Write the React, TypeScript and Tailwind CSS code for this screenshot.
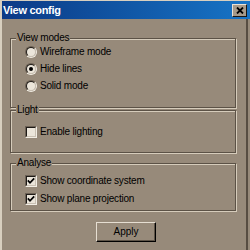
import type { ReactNode } from 'react';

const FONT = { fontFamily: '"Liberation Sans", Arial, sans-serif' };

function Radio({ checked }: { checked?: boolean }) {
  return (
    <span className="flex h-[12px] w-[12px] shrink-0 rounded-full border border-t-[#6c6155] border-l-[#6c6155] border-b-[#f2ede4] border-r-[#f2ede4]">
      <span className="flex flex-1 items-center justify-center rounded-full border border-t-[#1e1a16] border-l-[#1e1a16] border-b-[#c9c0b3] border-r-[#c9c0b3] bg-[#ebe5da]">
        {checked && <span className="h-[4px] w-[4px] rounded-full bg-black" />}
      </span>
    </span>
  );
}

function Checkbox({ checked }: { checked?: boolean }) {
  return (
    <span className="flex h-[12px] w-[12px] shrink-0 border border-t-[#6c6155] border-l-[#6c6155] border-b-[#f2ede4] border-r-[#f2ede4]">
      <span className="flex flex-1 items-center justify-center border border-t-[#1e1a16] border-l-[#1e1a16] border-b-[#c9c0b3] border-r-[#c9c0b3] bg-[#ebe5da]">
        {checked && (
          <svg width="8" height="8" viewBox="0 0 8 8">
            <polyline points="0.8,3.4 3,5.8 7.2,1.4" fill="none" stroke="#000" strokeWidth="1.7" />
          </svg>
        )}
      </span>
    </span>
  );
}

function Row({ children, label, tall }: { children: ReactNode; label: string; tall?: boolean }) {
  return (
    <div className={tall ? 'flex h-[18px] items-center gap-[3px] pl-[14px]' : 'flex h-[17px] items-center gap-[3px] pl-[14px]'}>
      {children}
      <span className="text-[10px] leading-[12px] tracking-[-0.2px] text-black">{label}</span>
    </div>
  );
}

function Group({ label, className, children }: { label: string; className: string; children: ReactNode }) {
  return (
    <div
      className={`relative ml-[8px] w-[226px] border border-[#5c5246] shadow-[inset_1px_1px_0_#d6ccbb,1px_1px_0_#d6ccbb] ${className}`}
    >
      <span className="absolute left-[5px] top-[-7px] bg-[#978a7a] px-[1px] text-[10px] leading-[12px] tracking-[-0.2px] text-black">
        {label}
      </span>
      {children}
    </div>
  );
}

export default function App() {
  return (
    <div
      className="flex h-[250px] w-[250px] flex-col overflow-hidden border-l-2 border-t border-l-[#d8cfbf] border-t-[#d8cfbf] bg-[#978a7a]"
      style={FONT}
    >
      <div className="flex h-[18px] shrink-0 items-center justify-between bg-gradient-to-r from-[#0c3a86] to-[#1774c6] pl-[1px] pr-[3px]">
        <span className="text-[11px] font-bold leading-[13px] tracking-[-0.3px] text-white">View config</span>
        <span className="flex h-[13px] w-[15px] items-center justify-center border border-t-[#eae3d8] border-l-[#eae3d8] border-b-[#1a1612] border-r-[#1a1612] bg-[#a69a8a]">
          <svg width="8" height="7" viewBox="0 0 8 7">
            <path d="M1 0.5 L7 6.5 M7 0.5 L1 6.5" stroke="#000" strokeWidth="1.8" />
          </svg>
        </span>
      </div>

      <div className="mr-[2px] flex flex-1 flex-col border-r-2 border-r-[#574d42]">
        <Group label="View modes" className="mt-[19px] h-[70px] pt-[4px]">
          <Row label="Wireframe mode">
            <Radio />
          </Row>
          <Row label="Hide lines">
            <Radio checked />
          </Row>
          <Row label="Solid mode">
            <Radio />
          </Row>
        </Group>

        <Group label="Light" className="mt-[2px] h-[43px] pt-[12px]">
          <Row label="Enable lighting">
            <Checkbox />
          </Row>
        </Group>

        <Group label="Analyse" className="mt-[10px] h-[48px] pt-[8px]">
          <Row label="Show coordinate system" tall>
            <Checkbox checked />
          </Row>
          <Row label="Show plane projection" tall>
            <Checkbox checked />
          </Row>
        </Group>

        <button className="ml-[94px] mt-[11px] flex h-[20px] w-[60px] items-center justify-center border border-t-[#e6ded2] border-l-[#e6ded2] border-b-black border-r-black bg-[#978a7a] text-[10px] leading-[12px] text-black shadow-[inset_-1px_-1px_0_#5e5448]">
          Apply
        </button>
      </div>
    </div>
  );
}
